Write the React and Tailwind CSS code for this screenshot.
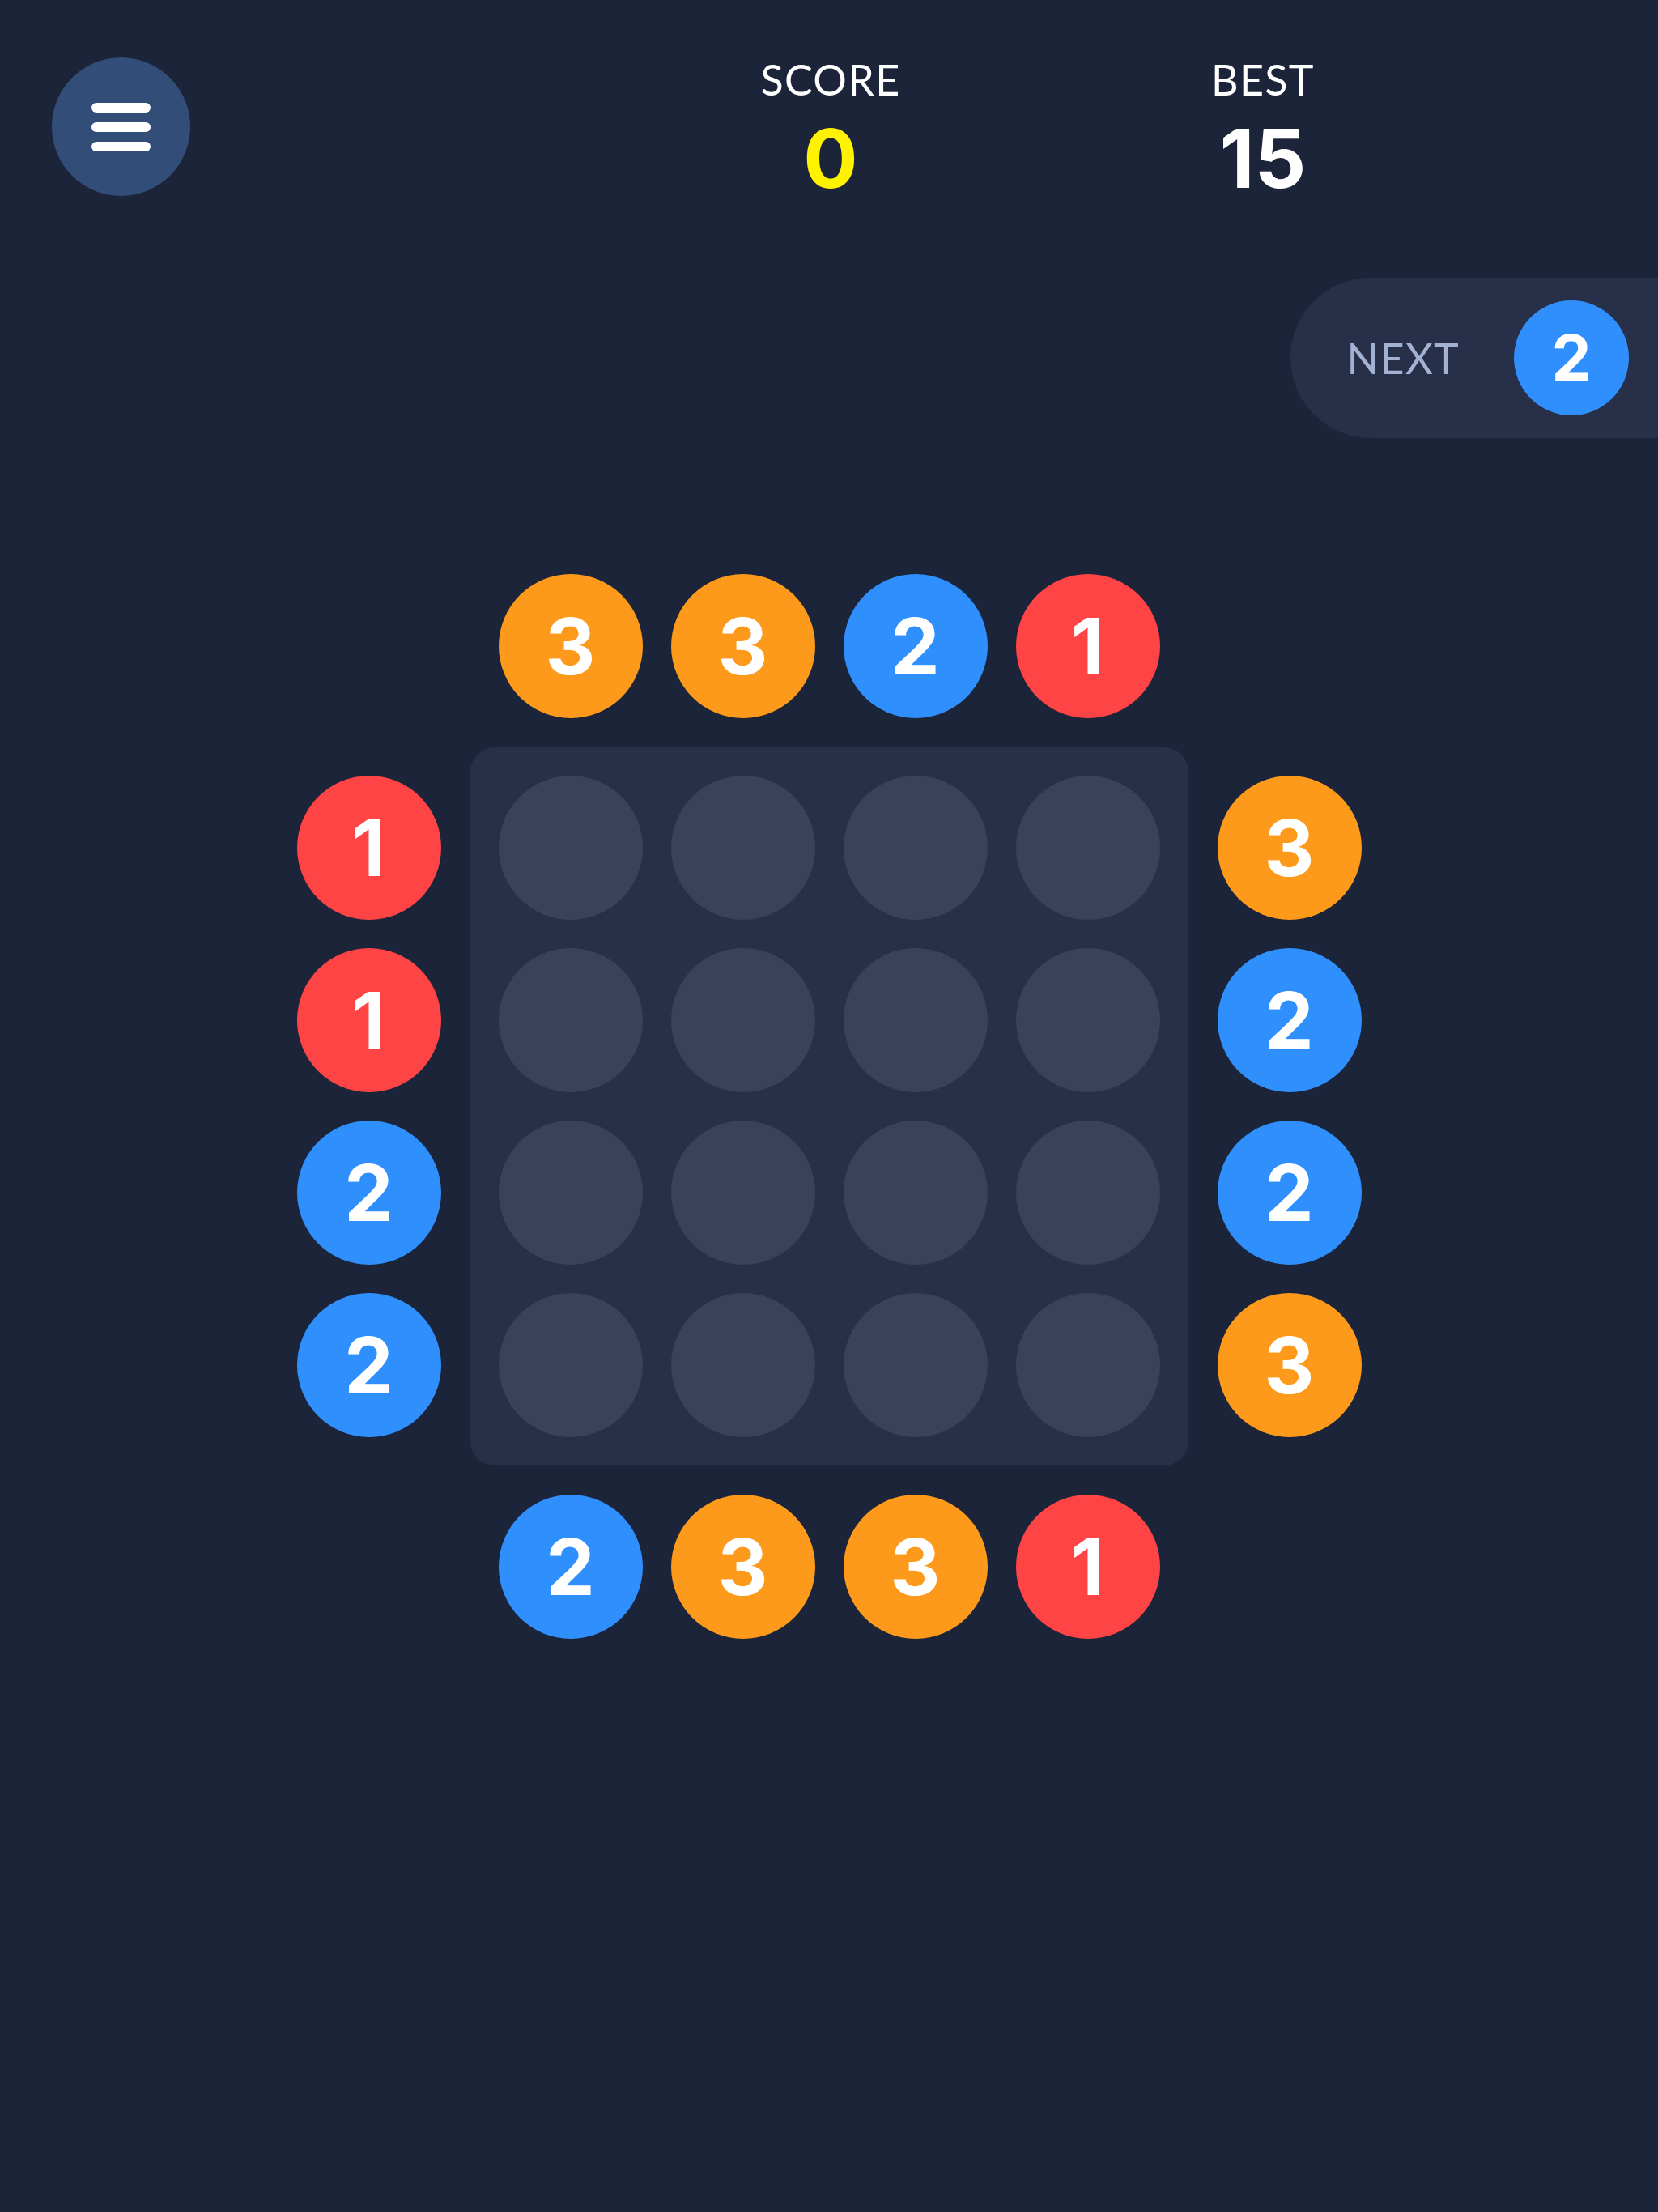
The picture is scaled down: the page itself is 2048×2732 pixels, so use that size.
const LABEL = { fontFamily: 'Lato, "Open Sans", sans-serif' };
const DIGIT = { fontFamily: 'Inter, "Noto Sans", sans-serif' };

const COLORS = {
  1: 'bg-[#ff4446]',
  2: 'bg-[#2f8ffd]',
  3: 'bg-[#fe9a1b]',
};

const TOP = [3, 3, 2, 1];
const BOTTOM = [2, 3, 3, 1];
const LEFT = [1, 1, 2, 2];
const RIGHT = [3, 2, 2, 3];

function Ball({ value }) {
  return (
    <div
      className={`flex h-[178px] w-[178px] items-center justify-center rounded-full ${COLORS[value]}`}
    >
      <span className="text-[96px] font-bold leading-none text-white" style={DIGIT}>
        {value}
      </span>
    </div>
  );
}

function Stat({ label, value, accent }) {
  return (
    <div className="flex w-[300px] flex-col items-center">
      <span className="text-[52px] leading-none tracking-wide text-white" style={LABEL}>
        {label}
      </span>
      <span
        className={`mt-[22px] text-[100px] font-bold leading-none ${accent ? 'text-[#fff200]' : 'text-white'}`}
        style={DIGIT}
      >
        {value}
      </span>
    </div>
  );
}

export default function App() {
  return (
    <div className="min-h-[2732px] w-full bg-[#1b2439]">
      {/* top bar: menu + scores */}
      <div className="flex items-start pl-[64px] pt-[71px]">
        <button className="flex h-[171px] w-[171px] flex-col items-center justify-center gap-[12px] rounded-full bg-[#324e78]">
          <span className="h-[12px] w-[73px] rounded-full bg-white" />
          <span className="h-[12px] w-[73px] rounded-full bg-white" />
          <span className="h-[12px] w-[73px] rounded-full bg-white" />
        </button>
        <div className="ml-[641px] mt-[1px] flex">
          <Stat label="SCORE" value="0" accent />
          <div className="ml-[234px]">
            <Stat label="BEST" value="15" />
          </div>
        </div>
      </div>

      {/* next piece */}
      <div className="mt-[97px] flex justify-end">
        <div className="flex h-[198px] items-center rounded-l-full bg-[#273048] pl-[70px] pr-[36px]">
          <span className="text-[52px] leading-none tracking-wide text-[#a3b2d3]" style={LABEL}>
            NEXT
          </span>
          <div className="ml-[67px] flex h-[142px] w-[142px] items-center justify-center rounded-full bg-[#2f8ffd]">
            <span className="text-[78px] font-bold leading-none text-white" style={DIGIT}>
              2
            </span>
          </div>
        </div>
      </div>

      {/* board with the queued balls on each side */}
      <div className="mt-[168px] flex flex-col items-center gap-[36px]">
        <div className="flex gap-[35px]">
          {TOP.map((v, i) => (
            <Ball key={i} value={v} />
          ))}
        </div>
        <div className="flex items-center gap-[36px]">
          <div className="flex flex-col gap-[35px]">
            {LEFT.map((v, i) => (
              <Ball key={i} value={v} />
            ))}
          </div>
          <div className="grid grid-cols-4 gap-[35px] rounded-[30px] bg-[#273048] p-[35px]">
            {Array.from({ length: 16 }).map((_, i) => (
              <div key={i} className="h-[178px] w-[178px] rounded-full bg-[#3a4259]" />
            ))}
          </div>
          <div className="flex flex-col gap-[35px]">
            {RIGHT.map((v, i) => (
              <Ball key={i} value={v} />
            ))}
          </div>
        </div>
        <div className="flex gap-[35px]">
          {BOTTOM.map((v, i) => (
            <Ball key={i} value={v} />
          ))}
        </div>
      </div>
    </div>
  );
}
